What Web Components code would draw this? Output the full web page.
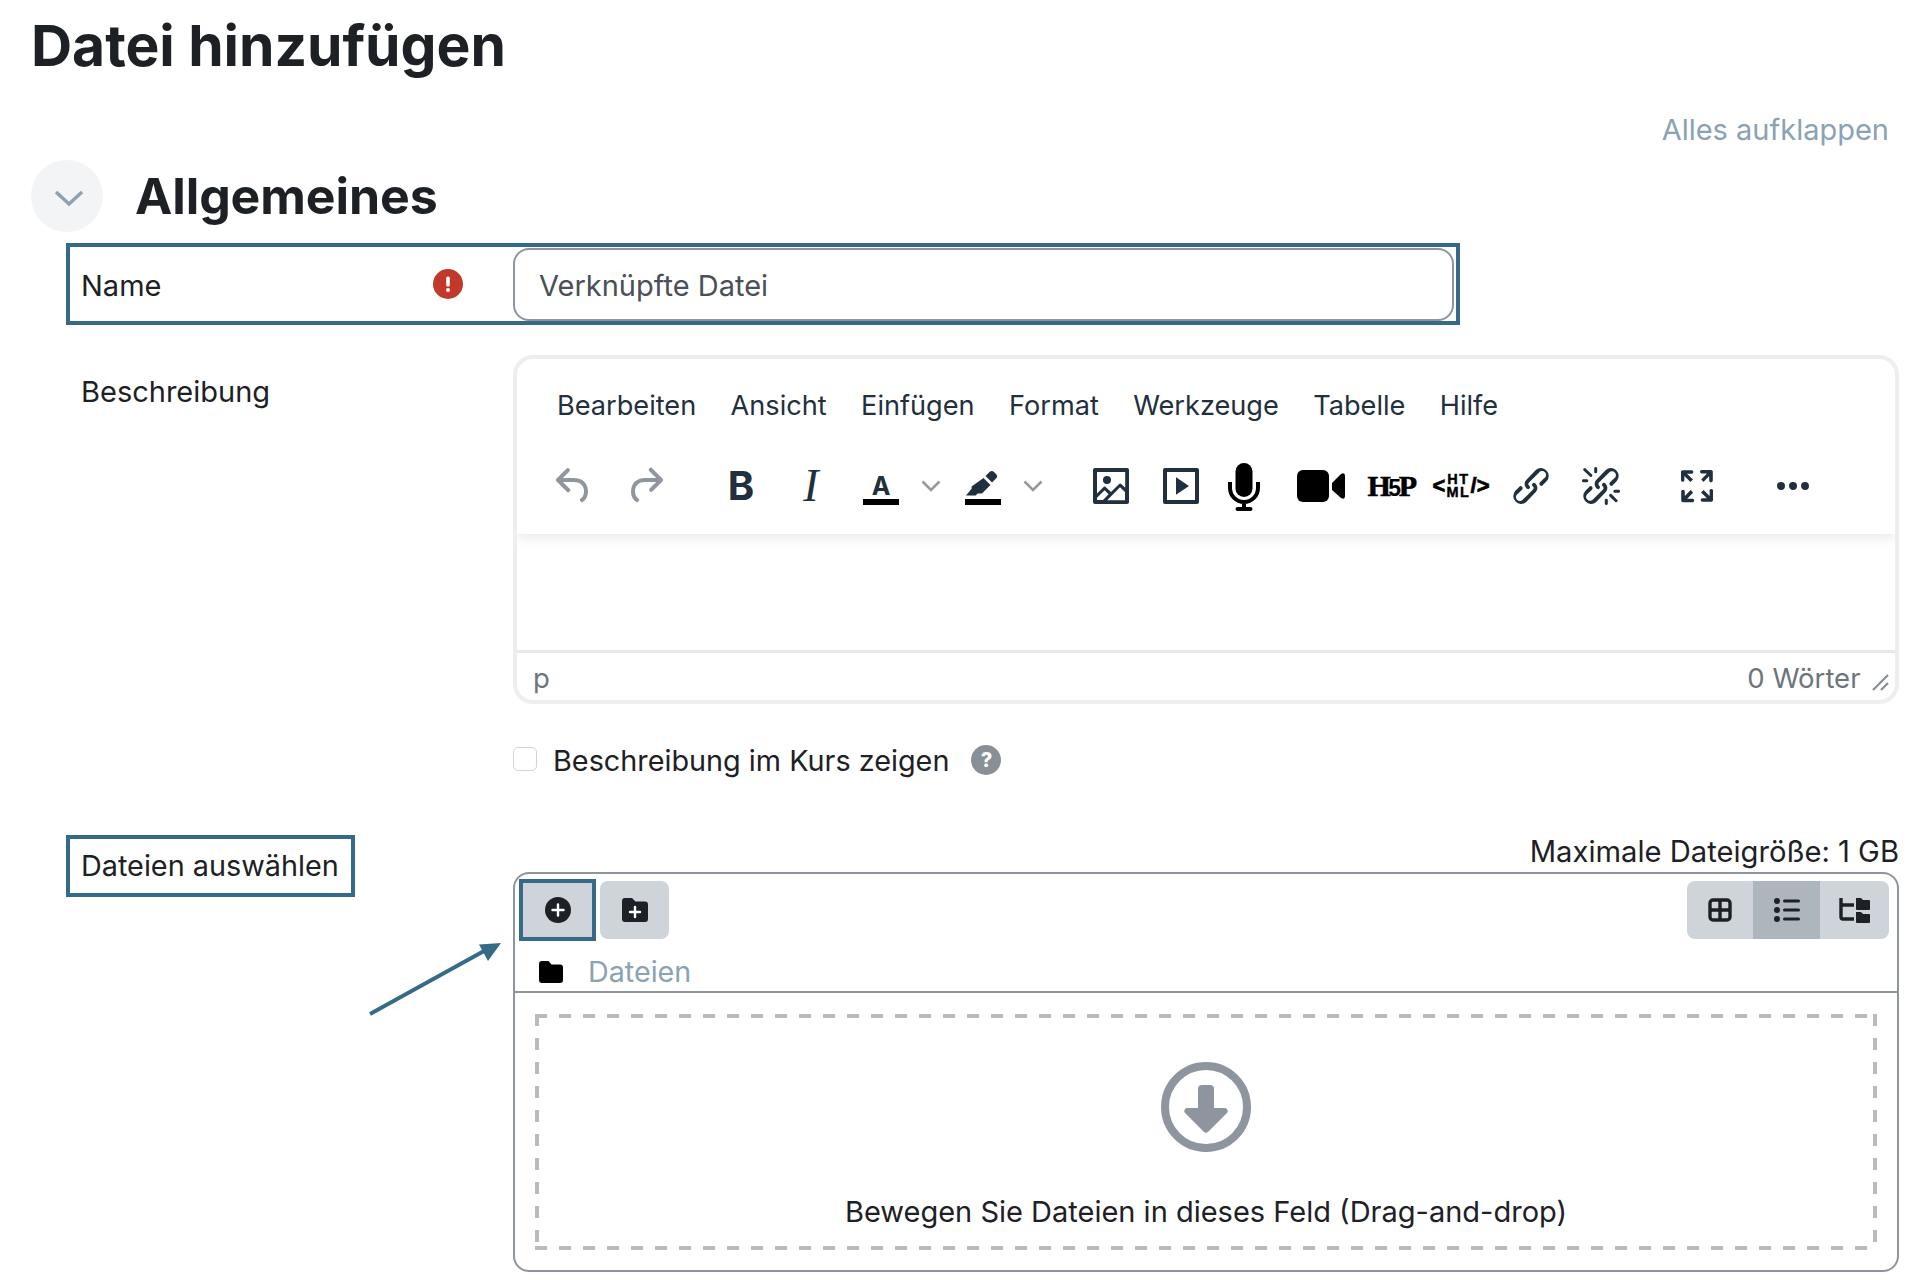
<!DOCTYPE html>
<html lang="de">
<head>
<meta charset="utf-8">
<title>Datei hinzufügen</title>
<style>
    html, body { margin: 0; background: #fff; }
    body { font-family: Inter, "Liberation Sans", sans-serif; color: #1d2125; }
</style>
</head>
<body>
<moodle-page>
    <page-title>Datei hinzufügen</page-title>
    <expand-link>Alles aufklappen</expand-link>
    <section-head>Allgemeines</section-head>
    <name-field label="Name" value="Verknüpfte Datei"></name-field>
    <form-row label="Beschreibung" style="margin-top:30px"><tiny-editor></tiny-editor></form-row>
    <form-row style="margin-top:37px"><show-check>Beschreibung im Kurs zeigen</show-check></form-row>
    <form-row label="Dateien auswählen" boxed style="margin-top:56px"><file-picker></file-picker></form-row>
</moodle-page>

<script>
const TEAL = '#366b87';

class MoodlePage extends HTMLElement {
    constructor() {
        super();
        this.attachShadow({ mode: 'open' });
        this.shadowRoot.innerHTML = `
            <style>
                :host { display: block; width: 1928px; height: 1280px; box-sizing: border-box; padding: 0 29px 0 31px; overflow: hidden; }
            </style>
            <slot></slot>
        `;
    }
}

class PageTitle extends HTMLElement {
    constructor() {
        super();
        this.attachShadow({ mode: 'open' });
        this.shadowRoot.innerHTML = `
            <style>
                :host { display: block; padding-top: 11px; font-size: 57px; line-height: 70px; font-weight: 700; letter-spacing: -0.05px; color: #1d2125; }
            </style>
            <slot></slot>
        `;
    }
}

class ExpandLink extends HTMLElement {
    constructor() {
        super();
        this.attachShadow({ mode: 'open' });
        this.shadowRoot.innerHTML = `
            <style>
                :host { display: block; margin-top: 31px; padding-right: 10px; text-align: right; font-size: 29px; line-height: 36px; color: #8ba2b3; }
            </style>
            <slot></slot>
        `;
    }
}

class SectionHead extends HTMLElement {
    constructor() {
        super();
        this.attachShadow({ mode: 'open' });
        this.shadowRoot.innerHTML = `
            <style>
                :host { display: flex; align-items: center; gap: 32px; margin-top: 12px; height: 72px; }
                .toggle { width: 72px; height: 72px; border-radius: 50%; background: #f2f4f6; display: flex; align-items: center; justify-content: center; }
                svg { margin: 4px 0 0 3px; }
                .text { font-size: 50px; line-height: 72px; font-weight: 700; letter-spacing: -0.1px; }
            </style>
            <div class="toggle">
                <svg width="30" height="16" viewBox="0 0 30 16"><path d="M2 2l13 12L28 2" fill="none" stroke="#8ba2b3" stroke-width="3.4"/></svg>
            </div>
            <div class="text"><slot></slot></div>
        `;
    }
}

class NameField extends HTMLElement {
    constructor() {
        super();
        this.attachShadow({ mode: 'open' });
        this.shadowRoot.innerHTML = `
            <style>
                :host { display: flex; align-items: center; box-sizing: border-box; margin: 11px 0 0 35px; width: 1394px; height: 82px; border: 4px solid ${TEAL}; font-size: 29px; }
                .label { width: 443px; box-sizing: border-box; padding: 0 50px 0 11px; display: flex; align-items: center; justify-content: space-between; }
                .label span { padding-top: 2px; }
                .input { width: 941px; height: 73px; box-sizing: border-box; border: 2px solid #8f959e; border-radius: 16px; padding: 3px 24px 0; display: flex; align-items: center; color: #495057; }
            </style>
            <div class="label"><span>${this.getAttribute('label')}</span>
                <svg width="30" height="30" viewBox="0 0 30 30"><circle cx="15" cy="15" r="15" fill="#c0392b"/><rect x="13.2" y="7.5" width="3.6" height="10" rx="1.6" fill="#fff"/><circle cx="15" cy="21" r="2" fill="#fff"/></svg>
            </div>
            <div class="input">${this.getAttribute('value')}</div>
        `;
    }
}

class FormRow extends HTMLElement {
    constructor() {
        super();
        this.attachShadow({ mode: 'open' });
        const label = this.getAttribute('label') || '';
        this.shadowRoot.innerHTML = `
            <style>
                :host { display: grid; grid-template-columns: 447px 1386px; margin-left: 35px; position: relative; font-size: 29px; }
                .label { padding: 19px 0 0 15px; line-height: 36px; }
                :host([boxed]) .label { padding: 0; font-size: 28.8px; }
                :host([boxed]) .label span { display: inline-block; box-sizing: border-box; height: 62px; line-height: 54px; padding: 0 12px 0 11px; border: 4px solid ${TEAL}; }
            </style>
            <div class="label">${label ? `<span>${label}</span>` : ''}</div>
            <div><slot></slot></div>
        `;
    }
}

const TOOL_ICONS = {
    undo: '<path d="M6.4 8H12c3.7 0 6.2 2 6.8 5.1.6 2.7-.4 5.6-2.3 6.8a1 1 0 0 1-1-1.8c1.1-.6 1.8-2.7 1.4-4.6-.5-2.1-2.1-3.5-4.9-3.5H6.4l3.3 3.3a1 1 0 1 1-1.4 1.4l-5-5a1 1 0 0 1 0-1.4l5-5a1 1 0 0 1 1.4 1.4L6.4 8Z"/>',
    redo: '<path d="M17.6 10H12c-2.8 0-4.4 1.4-4.9 3.5-.4 2 .3 4 1.4 4.6a1 1 0 1 1-1 1.8c-2-1.2-2.9-4.1-2.3-6.8.6-3 3-5.1 6.8-5.1h5.6l-3.3-3.3a1 1 0 1 1 1.4-1.4l5 5a1 1 0 0 1 0 1.4l-5 5a1 1 0 0 1-1.4-1.4l3.3-3.3Z"/>',
    image: '<path d="M5 15.7l3.3-3.2c.3-.3.7-.3 1 0L12 15l4.1-4c.3-.4.8-.4 1 0l2 1.9V5H5v10.7ZM5 18V19h3l2.8-2.9-2-2L5 17.9Zm14-3l-2.5-2.4-6.4 6.5H19v-4ZM4 3h16c.6 0 1 .4 1 1v16c0 .6-.4 1-1 1H4a1 1 0 0 1-1-1V4c0-.6.4-1 1-1Zm6 8a2 2 0 1 0 0-4 2 2 0 0 0 0 4Z"/>',
    media: '<path d="M4 3h16c.6 0 1 .4 1 1v16c0 .6-.4 1-1 1H4a1 1 0 0 1-1-1V4c0-.6.4-1 1-1Zm1 2v14h14V5H5Zm4.5 2.6l6.5 4.4-6.5 4.4V7.6Z" fill-rule="evenodd"/>',
    link: '<path d="M6.2 12.3a1 1 0 0 1 1.4 1.4l-2 2a2 2 0 1 0 2.6 2.8l4.8-4.8a1 1 0 0 0 0-1.4 1 1 0 1 1 1.4-1.3 2.9 2.9 0 0 1 0 4L9.6 20a3.9 3.9 0 0 1-5.5-5.5l2-2Zm11.6-.6a1 1 0 0 1-1.4-1.4l2-2a2 2 0 1 0-2.6-2.8L11 10.3a1 1 0 0 0 0 1.4A1 1 0 1 1 9.6 13a2.9 2.9 0 0 1 0-4L14.4 4a3.9 3.9 0 0 1 5.5 5.5l-2 2Z"/>',
    unlink: '<path d="M6.2 12.3a1 1 0 0 1 1.4 1.4l-2.1 2a2 2 0 1 0 2.7 2.8l4.8-4.8a1 1 0 0 0 0-1.4 1 1 0 1 1 1.4-1.3 2.9 2.9 0 0 1 0 4L9.6 20a3.9 3.9 0 0 1-5.5-5.5l2-2Zm11.6-.6a1 1 0 0 1-1.4-1.4l2.1-2a2 2 0 1 0-2.7-2.8L11 10.3a1 1 0 0 0 0 1.4A1 1 0 1 1 9.6 13a2.9 2.9 0 0 1 0-4L14.4 4a3.9 3.9 0 0 1 5.5 5.5l-2 2ZM7.6 6.3a.8.8 0 0 1-1 1.1L3.3 4.2a.7.7 0 1 1 1-1l3.2 3.1ZM5.1 8.6a.8.8 0 0 1 0 1.5H3a.8.8 0 0 1 0-1.5H5Zm5-3.5a.8.8 0 0 1-1.5 0V3a.8.8 0 0 1 1.5 0v2Zm6 11.8a.8.8 0 0 1 1-1l3.2 3.2a.8.8 0 0 1-1 1L16 17Zm-2.2 2a.8.8 0 0 1 1.5 0V21a.8.8 0 0 1-1.5 0V19Zm5-3.5a.7.7 0 1 1 0-1.5H21a.8.8 0 0 1 0 1.5H19Z"/>',
    fullscreen: '<path d="M15.3 10l-1.2-1.3 2.9-3h-2.3a.9.9 0 1 1 0-1.7H19c.5 0 .9.4.9.9v4.4a.9.9 0 1 1-1.8 0V7l-2.9 3Zm0 4l3 3v-2.3a.9.9 0 1 1 1.7 0V19c0 .5-.4.9-.9.9h-4.4a.9.9 0 1 1 0-1.8H17l-3-2.9 1.3-1.2ZM10 15.4l-2.9 3h2.3a.9.9 0 1 1 0 1.7H5a.9.9 0 0 1-.9-.9v-4.4a.9.9 0 1 1 1.8 0V17l2.9-3 1.2 1.3ZM8.7 10L5.7 7v2.3a.9.9 0 0 1-1.7 0V5c0-.5.4-.9.9-.9h4.4a.9.9 0 0 1 0 1.8H7l3 2.9-1.3 1.2Z"/>',
    more: '<path d="M6 10a2 2 0 0 0-2 2c0 1.1.9 2 2 2a2 2 0 0 0 2-2 2 2 0 0 0-2-2Zm12 0a2 2 0 0 0-2 2c0 1.1.9 2 2 2a2 2 0 0 0 2-2 2 2 0 0 0-2-2Zm-6 0a2 2 0 0 0-2 2c0 1.1.9 2 2 2a2 2 0 0 0 2-2 2 2 0 0 0-2-2Z"/>'
};

const ico = (name, cls = '') => `<svg class="${cls}" width="48" height="48" viewBox="0 0 24 24" fill="currentColor">${TOOL_ICONS[name]}</svg>`;
const chevron = '<div class="chev"><svg width="20" height="12" viewBox="0 0 20 12"><path d="M1.5 1.5L10 10l8.5-8.5" fill="none" stroke="#96999e" stroke-width="2.6"/></svg></div>';

class TinyEditor extends HTMLElement {
    constructor() {
        super();
        this.attachShadow({ mode: 'open' });
        const menus = ['Bearbeiten', 'Ansicht', 'Einfügen', 'Format', 'Werkzeuge', 'Tabelle', 'Hilfe'];
        this.shadowRoot.innerHTML = `
            <style>
                :host { display: block; box-sizing: border-box; height: 349px; border: 4px solid #eee; border-radius: 20px; color: #222f3e; overflow: hidden; }
                .head { height: 175px; box-shadow: 0 4px 10px rgba(34,47,62,.1); position: relative; }
                .menu { display: flex; gap: 34.4px; padding: 25px 0 0 40px; height: 44px; font-size: 27.15px; line-height: 44px; }
                .tools { display: flex; align-items: center; height: 68px; margin-top: 24px; padding-left: 22px; }
                .btn { width: 70px; height: 68px; display: flex; align-items: center; justify-content: center; flex: none; }
                .off { opacity: .5; }
                .chev { width: 32px; display: flex; justify-content: center; flex: none; margin-left: -1px; }
                .ml26 { margin-left: 26px; }
                .bold { font: 700 40px/1 Inter, sans-serif; }
                .ital { font: italic 400 46px/1 "Liberation Serif", serif; }
                .under { display: flex; flex-direction: column; align-items: center; width: 36px; }
                .letter { font: 700 25px/30px Inter, sans-serif; height: 28px; margin-top: 3px; }
                .bar { width: 36px; height: 6px; background: #000; }
                .h5p { font: 700 30px/1 "Liberation Serif", serif; color: #000; letter-spacing: -2.5px; -webkit-text-stroke: .6px #000; }
                .h5p small { font: 700 23px/1 "Liberation Sans", sans-serif; -webkit-text-stroke: 0; letter-spacing: -2.5px; position: relative; top: 2px; }
                .html { display: flex; align-items: center; color: #000; font: 700 22px/1 "Liberation Sans", sans-serif; -webkit-text-stroke: .7px #000; }
                .html .stack { font-size: 14.5px; line-height: 13px; letter-spacing: 1.6px; text-align: center; margin: 0 0 0 1px; -webkit-text-stroke: .4px #000; }
                .edit { height: 116px; }
                .status { box-sizing: border-box; height: 50px; border-top: 3px solid #e8e8e8; display: flex; align-items: center; justify-content: space-between; padding: 3px 6px 0 16px; font-size: 27.5px; color: #6c757d; }
                .right { display: flex; align-items: center; gap: 11.5px; }
                .right svg { margin-top: 8px; }
            </style>
            <div class="head">
                <div class="menu">${menus.map(m => `<span>${m}</span>`).join('')}</div>
                <div class="tools">
                    <div class="btn off">${ico('undo')}</div>
                    <div class="btn off" style="margin-left:.5px">${ico('redo')}</div>
                    <div class="btn bold" style="margin-left:26.5px">B</div>
                    <div class="btn ital">I</div>
                    <div class="btn"><div class="under"><div class="letter">A</div><div class="bar"></div></div></div>
                    ${chevron}
                    <div class="btn" style="margin-left:1px"><div class="under">
                        <svg width="36" height="30" viewBox="0 0 36 30" fill="currentColor" style="margin-top:1px"><path d="M20.5 7l4-4a3.2 3.2 0 0 1 4.5 0l2 2a3.2 3.2 0 0 1 0 4.5l-4 4Z"/><path d="M18.5 9l7 7-8.6 8.6h-4.3l-2 2H1l5.6-6.8v-2.3Z"/></svg>
                        <div class="bar"></div></div></div>
                    ${chevron}
                    <div class="btn" style="margin-left:27px">${ico('image')}</div>
                    <div class="btn">${ico('media')}</div>
                    <div class="btn" style="margin:0 7px 0 -7px;color:#000">
                        <svg width="36" height="49" viewBox="0 0 36 49" fill="none" stroke="currentColor" stroke-width="4"><rect x="9.5" y="1" width="17" height="34" rx="8.5" fill="currentColor" stroke="none"/><path d="M4 20v6a14 14 0 0 0 28 0v-6M18 40v6"/><rect x="9.5" y="45" width="17" height="4" rx="2" fill="currentColor" stroke="none"/></svg>
                    </div>
                    <div class="btn" style="color:#000">
                        <svg width="48" height="32" viewBox="0 0 48 32" fill="currentColor"><rect width="32" height="32" rx="6"/><path d="M35 13l9-9q4-2 4 2v20q0 4-4 2l-9-8Z"/></svg>
                    </div>
                    <div class="btn h5p">H<small>5</small>P</div>
                    <div class="btn html"><span>&lt;</span><span class="stack">HT<br>ML</span><span>/&gt;</span></div>
                    <div class="btn">${ico('link')}</div>
                    <div class="btn">${ico('unlink')}</div>
                    <div class="btn ml26">${ico('fullscreen')}</div>
                    <div class="btn ml26">${ico('more')}</div>
                </div>
            </div>
            <div class="edit"></div>
            <div class="status">
                <span>p</span>
                <div class="right"><span>0 Wörter</span>
                    <svg width="17" height="17" viewBox="0 0 17 17" fill="none" stroke="#8a8f94" stroke-width="2.2"><path d="M1 16L16 1M9 16l7-7"/></svg>
                </div>
            </div>
        `;
    }
}

class ShowCheck extends HTMLElement {
    constructor() {
        super();
        this.attachShadow({ mode: 'open' });
        this.shadowRoot.innerHTML = `
            <style>
                :host { display: flex; align-items: center; height: 38px; font-size: 28.8px; }
                .box { width: 24px; height: 24px; box-sizing: border-box; border: 1.5px solid #ced4da; border-radius: 5px; margin-right: 16px; margin-top: -3px; }
                .help { width: 30px; height: 30px; border-radius: 50%; background: #888f96; color: #fff; font-size: 20px; font-weight: 800; display: flex; align-items: center; justify-content: center; margin-left: 22px; }
            </style>
            <div class="box"></div>
            <span><slot></slot></span>
            <div class="help">?</div>
        `;
    }
}

class FilePicker extends HTMLElement {
    constructor() {
        super();
        this.attachShadow({ mode: 'open' });
        this.shadowRoot.innerHTML = `
            <style>
                :host { display: block; }
                .max { text-align: right; font-size: 29.2px; line-height: 34px; height: 34px; margin-bottom: 3px; }
                .fm { box-sizing: border-box; height: 400px; border: 2px solid #8f959e; border-radius: 16px; display: flex; flex-direction: column; }
                .bar { display: flex; align-items: center; gap: 4px; padding: 5px 8px 0 4px; }
                .btn { width: 69px; height: 58px; background: #ced4da; border-radius: 8px; display: flex; align-items: center; justify-content: center; }
                .btn.add { width: 77px; height: 62px; box-sizing: border-box; border: 4px solid ${TEAL}; border-radius: 0; }
                .views { margin-left: auto; display: flex; width: 202px; height: 58px; background: #ced4da; border-radius: 8px; overflow: hidden; }
                .views div { width: 66px; flex: none; display: flex; align-items: center; justify-content: center; }
                .views .on { background: #adb5bd; width: 67px; }
                .views .tree { width: 69px; }
                .path { display: flex; align-items: center; gap: 25px; height: 52px; box-sizing: border-box; padding: 11px 0 0 24px; border-bottom: 2px solid #8f959e; font-size: 28.7px; color: #8ba2b3; }
                .drop { flex: 1; margin: 21px 20px 20px 20px; padding-top: 48px; display: flex; flex-direction: column; align-items: center;
                    background:
                        linear-gradient(90deg, #bbb 12px, transparent 12px) 0 0 / 24px 4px repeat-x,
                        linear-gradient(90deg, #bbb 12px, transparent 12px) 0 100% / 24px 4px repeat-x,
                        linear-gradient(#bbb 12px, transparent 12px) 0 0 / 4px 24px repeat-y,
                        linear-gradient(#bbb 12px, transparent 12px) 100% 0 / 4px 24px repeat-y; }
                .drop span { margin-top: 42px; font-size: 29px; line-height: 36px; }
                .arrow { position: absolute; left: 300px; top: 105px; }
            </style>
            <div class="max">Maximale Dateigröße: 1 GB</div>
            <div class="fm">
                <div class="bar">
                    <div class="btn add">
                        <svg width="26" height="26" viewBox="0 0 26 26"><circle cx="13" cy="13" r="13" fill="#1d2125"/><path d="M13 7.5v11M7.5 13h11" stroke="#fff" stroke-width="2.4" stroke-linecap="round"/></svg>
                    </div>
                    <div class="btn">
                        <svg width="26" height="24" viewBox="0 0 26 24"><path d="M3 0h7l3.500 3.500H23a3 3 0 0 1 3 3V21a3 3 0 0 1-3 3H3a3 3 0 0 1-3-3V3a3 3 0 0 1 3-3Z" fill="#1d2125"/><path d="M13 9v10M8 14h10" stroke="#fff" stroke-width="2.4" stroke-linecap="round"/></svg>
                    </div>
                    <div class="views">
                        <div><svg width="24" height="24" viewBox="0 0 24 24" fill="none" stroke="#1d2125" stroke-width="3.400"><rect x="2" y="2" width="20" height="20" rx="3"/><path d="M12 2v20M2 12h20"/></svg></div>
                        <div class="on"><svg width="26" height="24" viewBox="0 0 26 24" fill="#1d2125"><circle cx="3" cy="3" r="3"/><circle cx="3" cy="12" r="3"/><circle cx="3" cy="21" r="3"/><rect x="9" y="1.500" width="17" height="3" rx="1.500"/><rect x="9" y="10.500" width="17" height="3" rx="1.500"/><rect x="9" y="19.500" width="17" height="3" rx="1.500"/></svg></div>
                        <div class="tree"><svg width="31" height="25" viewBox="0 0 31 25" fill="#1d2125"><path d="M2 0v19a2 2 0 0 0 2 2h11M2 7h13" fill="none" stroke="#1d2125" stroke-width="3.400"/><path d="M17 0h5l2 2h6a1 1 0 0 1 1 1v8a1 1 0 0 1-1 1H18a1 1 0 0 1-1-1ZM17 14h5l2 2h6a1 1 0 0 1 1 1v7a1 1 0 0 1-1 1H18a1 1 0 0 1-1-1Z"/></svg></div>
                    </div>
                </div>
                <div class="path">
                    <svg width="24" height="22" viewBox="0 0 24 22"><path d="M3 0h6.500l3 3.500H21a3 3 0 0 1 3 3V19a3 3 0 0 1-3 3H3a3 3 0 0 1-3-3V3a3 3 0 0 1 3-3Z" fill="#000"/></svg>
                    <span>Dateien</span>
                </div>
                <div class="drop">
                    <svg width="90" height="90" viewBox="0 0 90 90"><circle cx="45" cy="45" r="41" fill="none" stroke="#8f959e" stroke-width="8"/><path d="M41 23h8a4 4 0 0 1 4 4v19h11a3 3 0 0 1 2 5L47.500 69.500a3.500 3.500 0 0 1-5 0L24 51a3 3 0 0 1 2-5h11V27a4 4 0 0 1 4-4Z" fill="#8f959e"/></svg>
                    <span>Bewegen Sie Dateien in dieses Feld (Drag-and-drop)</span>
                </div>
            </div>
            <svg class="arrow" width="140" height="80" viewBox="0 0 140 80"><path d="M4 74L118 11" stroke="${TEAL}" stroke-width="4"/><path d="M135 3L113 4.500L122 21Z" fill="${TEAL}"/></svg>
        `;
    }
}

customElements.define('moodle-page', MoodlePage);
customElements.define('page-title', PageTitle);
customElements.define('expand-link', ExpandLink);
customElements.define('section-head', SectionHead);
customElements.define('name-field', NameField);
customElements.define('form-row', FormRow);
customElements.define('tiny-editor', TinyEditor);
customElements.define('show-check', ShowCheck);
customElements.define('file-picker', FilePicker);
</script>
</body>
</html>
